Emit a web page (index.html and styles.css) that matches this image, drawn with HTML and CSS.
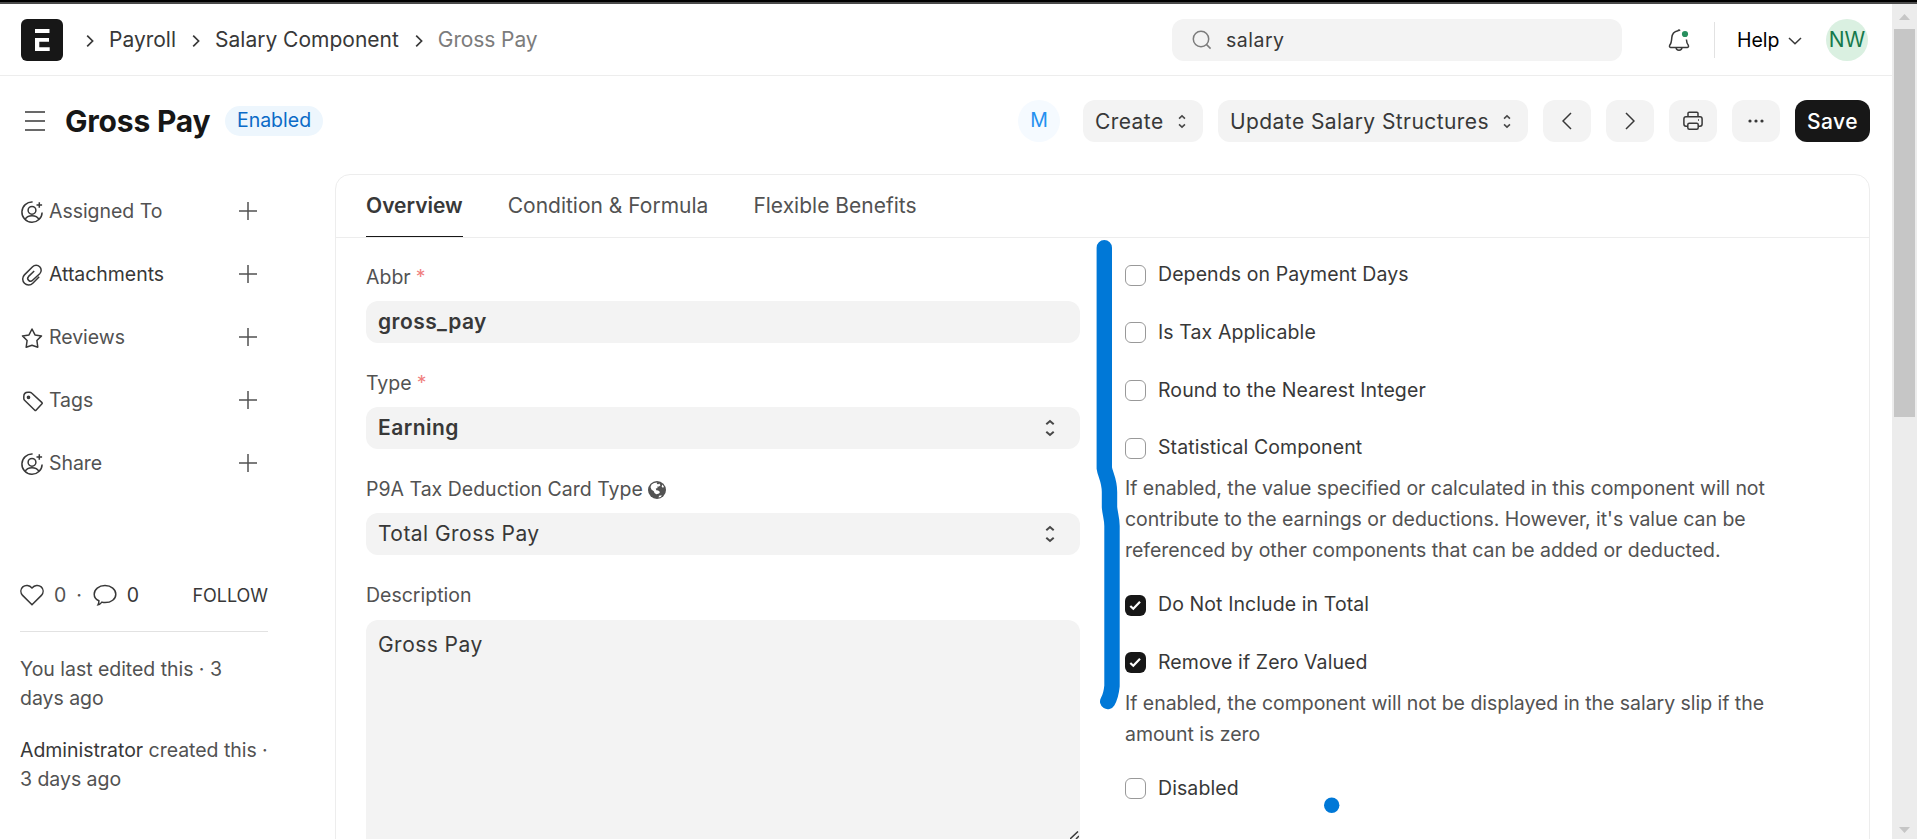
FILE: index.html
```html
<!DOCTYPE html>
<html lang="en">
<head>
<meta charset="utf-8">
<title>Gross Pay</title>
<link rel="stylesheet" href="styles.css">
</head>
<body>
<svg class="defs" width="0" height="0">
  <symbol id="assign" viewBox="0 0 24 24"><path d="M12.6 2.1A10.1 10.1 0 1 0 22.1 12.4M5.2 19.3C6.4 16.9 9 15.8 12 15.8S17.6 16.9 18.8 19.3M19.3 2.2V7.8M16.5 5H22.1"/><circle cx="12" cy="10.3" r="3.9"/></symbol>
  <symbol id="clip" viewBox="0 0 24 24"><path d="M19.2 13.8L12.8 20.2A5.9 5.9 0 0 1 4.400 11.900L12.600 3.700A5 5 0 0 1 19.700 10.800L12.600 17.300A2.700 2.700 0 0 1 8.600 13.400L14.200 8"/></symbol>
  <symbol id="star" viewBox="0 0 24 24"><path d="M12 3L15 8.9L21.5 9.9L16.9 14.5L17.8 21.2L12 19.3L6.2 21.2L7.1 14.5L2.5 9.9L9 8.9Z" stroke-linejoin="round"/></symbol>
  <symbol id="tag" viewBox="0 0 24 24"><path d="M3.8 9.4V7.5Q3.800 3.200 8 3.200H9.600Q10.800 3.200 11.600 4L22 13.600Q22.600 14.200 22 14.800L16 21.300Q15.400 21.900 14.800 21.300L4.800 11.500Q3.800 10.600 3.800 9.400Z"/><circle cx="8.500" cy="8.300" r="1.100" fill="currentColor"/></symbol>
  <symbol id="plus" viewBox="0 0 18 18"><path d="M9 0V18M0 9H18"/></symbol>
  <symbol id="crumb" viewBox="0 0 8 12"><path d="M1.200 .6L6.600 6L1.200 11.400"/></symbol>
  <symbol id="updown" viewBox="0 0 10 18"><path d="M1.300 5.300L5 2L8.700 5.300M1.300 12.700L5 16L8.700 12.700"/></symbol>
</svg>
<div class="topline"></div>
<div class="window">
  <div class="page">
    <header class="navbar">
      <svg class="logo" viewBox="0 0 42 42"><rect width="42" height="42" rx="6" fill="#171717"/><path d="M14 10H28.500V14H14ZM14 19H28V22.700H18.300V28.300H28.700V32H14Z" fill="#fff"/></svg>
      <nav class="crumbs">
        <svg class="crumb"><use href="#crumb"/></svg><a>Payroll</a>
        <svg class="crumb"><use href="#crumb"/></svg><a>Salary Component</a>
        <svg class="crumb"><use href="#crumb"/></svg><a class="current">Gross Pay</a>
      </nav>
      <div class="search">
        <svg class="search-icon" viewBox="0 0 20 20"><circle cx="9" cy="9" r="7.700"/><path d="M14.600 14.600L18.600 18.600"/></svg>
        <span>salary</span>
      </div>
      <svg class="bell" viewBox="0 0 24 24"><path d="M13 2.700Q12 1.300 11 2.700C6.500 3.600 5 6.300 4.800 9.600C4.600 13 4.300 15.300 2.700 17.200Q2 19.200 3.600 19.400H20.400Q22 19.200 21.300 17.200Q19.700 15.500 19.400 11.500M9 19.500Q9.200 22.300 12 22.300T15 19.500"/><circle cx="18" cy="6" r="3.100" class="bell-dot"/></svg>
      <div class="divider"></div>
      <div class="help"><span>Help</span><svg class="help-arrow" viewBox="0 0 14 8"><path d="M1 1L7 6.800L13 1"/></svg></div>
      <div class="avatar user">NW</div>
    </header>

    <section class="page-head">
      <svg class="menu" viewBox="0 0 20 22"><path d="M0 2H20M0 11H20M0 20H20"/></svg>
      <h1>Gross Pay</h1>
      <span class="badge">Enabled</span>
      <div class="actions">
        <div class="avatar viewer">M</div>
        <button class="btn create"><span>Create</span><svg class="updown small"><use href="#updown"/></svg></button>
        <button class="btn update"><span>Update Salary Structures</span><svg class="updown small"><use href="#updown"/></svg></button>
        <button class="btn icon-btn"><svg class="arrow" viewBox="0 0 10 18"><path d="M9 1L1 9L9 17"/></svg></button>
        <button class="btn icon-btn"><svg class="arrow" viewBox="0 0 10 18"><path d="M1 1L9 9L1 17"/></svg></button>
        <button class="btn icon-btn"><svg class="printer" viewBox="0 0 20 20"><path d="M5 5.500V2.300Q5 1.200 6.100 1.200H13.900Q15 1.200 15 2.300V5.500M4.800 15.200H3Q.9 15.200 .9 13V8Q.9 5.800 3 5.800H17Q19.100 5.800 19.100 8V13Q19.100 15.200 17 15.200H15.200"/><rect x="4.800" y="12.300" width="10.400" height="5.900" rx="1.500"/><path d="M15 9H16"/></svg></button>
        <button class="btn icon-btn"><svg class="dots" viewBox="0 0 16 4"><circle cx="2" cy="2" r="1.600"/><circle cx="8" cy="2" r="1.600"/><circle cx="14" cy="2" r="1.600"/></svg></button>
        <button class="btn save"><span>Save</span></button>
      </div>
    </section>

    <div class="content">
      <aside class="sidebar">
        <ul class="links">
          <li><svg class="icon"><use href="#assign"/></svg><span>Assigned To</span><svg class="plus"><use href="#plus"/></svg></li>
          <li class="dark"><svg class="icon"><use href="#clip"/></svg><span>Attachments</span><svg class="plus"><use href="#plus"/></svg></li>
          <li><svg class="icon"><use href="#star"/></svg><span>Reviews</span><svg class="plus"><use href="#plus"/></svg></li>
          <li><svg class="icon"><use href="#tag"/></svg><span>Tags</span><svg class="plus"><use href="#plus"/></svg></li>
          <li><svg class="icon"><use href="#assign"/></svg><span>Share</span><svg class="plus"><use href="#plus"/></svg></li>
        </ul>
        <div class="stats">
          <svg class="icon" viewBox="0 0 24 24"><path d="M12 21.800L2.600 12.400C.2 9.600 .5 6 2.800 3.900C5.500 1.600 9.400 2.100 12 5C14.600 2.100 18.500 1.600 21.200 3.900C23.500 6 23.800 9.600 21.400 12.400Z"/></svg>
          <span class="likes">0</span><span class="sep">·</span>
          <svg class="icon" viewBox="0 0 24 24"><path d="M12 2.600C18.200 2.600 22.800 6.300 22.800 11.200S18.200 19.600 12 19.600Q10.500 19.600 8.900 19.100Q7 21.500 5 21.800Q6 20.100 5.900 17.800C3 16.400 1.200 14.100 1.200 11.200C1.200 6.300 5.800 2.600 12 2.600Z"/></svg>
          <span class="comments">0</span>
          <span class="follow">FOLLOW</span>
        </div>
        <p class="log">You last edited this · 3<br>days ago</p>
        <p class="log"><b>Administrator</b> created this ·<br>3 days ago</p>
      </aside>

      <main class="card">
        <div class="tabs"><a class="active">Overview</a><a>Condition &amp; Formula</a><a>Flexible Benefits</a></div>
        <div class="form">
          <div class="fields">
            <div class="field"><label>Abbr <i>*</i></label><div class="input bold">gross_pay</div></div>
            <div class="field"><label>Type <i>*</i></label><div class="input bold">Earning<svg class="updown"><use href="#updown"/></svg></div></div>
            <div class="field"><label>P9A Tax Deduction Card Type <svg class="globe" viewBox="0 0 18 18"><circle cx="9" cy="9" r="9" fill="#525252"/><path d="M3.600 3.400L6 2L9.300 1.500L8.700 3L10.300 3.300L11.300 2.600L12.500 4.300L11 5.600L9 5.800L9.800 7L7.800 7.600L8.300 9.200L10.200 9.600L12 11L11 12.600L8.300 13.200L6.500 12L5.800 10.200L3.400 8.600L2.500 6ZM14.500 3.600L16 6L14.800 6.800L13.600 5.400ZM11 14.800L13.800 14.200L12.800 15.900L10.600 16.600Z" fill="#fff"/></svg></label><div class="input">Total Gross Pay<svg class="updown"><use href="#updown"/></svg></div></div>
            <div class="field"><label class="tall">Description</label><div class="input area">Gross Pay</div></div>
          </div>
          <div class="checks">
            <div class="check"><span class="box"></span>Depends on Payment Days</div>
            <div class="check"><span class="box"></span>Is Tax Applicable</div>
            <div class="check"><span class="box"></span>Round to the Nearest Integer</div>
            <div class="check"><span class="box"></span>Statistical Component</div>
            <p class="hint">If enabled, the value specified or calculated in this component will not<br>contribute to the earnings or deductions. However, it's value can be<br>referenced by other components that can be added or deducted.</p>
            <div class="check"><span class="box on"><svg viewBox="0 0 21 21"><path d="M5.300 11L8.300 13.800L15 6.700"/></svg></span>Do Not Include in Total</div>
            <div class="check"><span class="box on"><svg viewBox="0 0 21 21"><path d="M5.300 11L8.300 13.800L15 6.700"/></svg></span>Remove if Zero Valued</div>
            <p class="hint">If enabled, the component will not be displayed in the salary slip if the<br>amount is zero</p>
            <div class="check"><span class="box"></span>Disabled</div>
          </div>
        </div>
      </main>
    </div>
  </div>
  <div class="scrollbar">
    <svg class="scroll-arrow" viewBox="0 0 11 6"><path d="M0 6L5.500 0L11 6Z"/></svg>
    <div class="thumb"></div>
    <svg class="scroll-arrow down" viewBox="0 0 11 6"><path d="M0 0L5.500 6L11 0Z"/></svg>
  </div>
</div>
<svg class="grip" viewBox="0 0 9 8"><path d="M0 8L8 .5M6 8L9 5"/></svg>
<svg class="marker" viewBox="0 0 1917 839"><path d="M1104.300 247.700V468C1105 474 1109.500 480 1109.500 492V507C1110 514 1112 518 1112 526V686Q1111 696 1107.700 701.500"/><circle cx="1331.700" cy="805.300" r="7.700"/></svg>
</body>
</html>
```
FILE: styles.css
```css
* { box-sizing: border-box; }
body {
  margin: 0;
  height: 839px;
  overflow: hidden;
  background: #fff;
  color: #383838;
  font: 400 21px/1.2 Inter, "Liberation Sans", sans-serif;
  display: flex;
  flex-direction: column;
}
svg { fill: none; stroke: #383838; stroke-width: 1.5; flex: none; display: block; }
.defs { position: absolute; }
p, h1, ul { margin: 0; padding: 0; }

.topline { height: 4px; flex: none; background: #000; border-bottom: 2px solid #4a4a4a; }
.window { flex: 1; min-height: 0; display: flex; }
.page { width: 1892px; overflow: hidden; }

/* Navigation bar */
.navbar { height: 72px; border-bottom: 1px solid #ededed; display: flex; align-items: center; padding: 0 24px 0 21px; }
.logo { width: 42px; height: 42px; stroke: none; }
.crumbs { display: flex; align-items: center; margin-left: 23px; padding-top: 1px; }
.crumb { width: 8px; height: 12px; margin: 1px 15px 0 16px; stroke-width: 1.7; }
.crumbs .crumb:first-child { margin-left: 0; }
.crumbs .current { color: #7c7c7c; letter-spacing: -0.1px; }
.search { margin-left: auto; width: 450px; height: 42px; border-radius: 12px; background: #f3f3f3; display: flex; align-items: center; padding-left: 20px; gap: 14px; font-size: 19.5px; letter-spacing: 0.5px; }
.search span { padding-top: 2px; }
.search-icon { width: 20px; height: 20px; stroke: #7c7c7c; }
.bell { width: 24px; height: 24px; margin-left: 45px; }
.bell-dot { fill: #278f5e; stroke: none; }
.divider { width: 1px; height: 36px; background: #e2e2e2; margin: 0 22px 0 23px; }
.help { width: 65px; display: flex; align-items: center; justify-content: space-between; color: #000; font-size: 19.5px; padding-top: 2px; }
.help-arrow { width: 14px; height: 8px; margin-top: 2px; }
.avatar { width: 42px; height: 42px; border-radius: 50%; display: flex; align-items: center; justify-content: center; }
.user { margin-left: 24px; background: #daf0e1; color: #16794c; }

/* Page head */
.page-head { height: 98px; padding: 0 22px 8px 25px; display: flex; align-items: center; }
.menu { width: 20px; height: 22px; stroke: #383838; stroke-width: 1.7; }
h1 { margin-left: 20px; width: 144px; font-size: 30px; font-weight: 700; letter-spacing: -0.2px; color: #171717; white-space: nowrap; }
.badge { margin-left: 16px; width: 98px; height: 30px; border-radius: 15px; background: #edf6fd; color: #0b6bc7; font-size: 19.5px; display: flex; align-items: center; justify-content: center; }
.actions { margin-left: auto; display: flex; gap: 15px; }
.viewer { background: #f5faff; color: #2490ef; font-size: 19.5px; margin-right: 8px; }
.btn { height: 42px; border: 0; border-radius: 12px; background: #f3f3f3; font: inherit; color: #383838; padding: 0 12px; display: flex; align-items: center; justify-content: space-between; letter-spacing: 0.42px; white-space: nowrap; }
.btn span { padding-top: 1px; }
.create { width: 120px; }
.update { width: 310px; }
.icon-btn { width: 48px; justify-content: center; }
.save { width: 75px; background: #171717; color: #fff; font-weight: 500; justify-content: center; padding: 0; }
.updown { width: 10px; height: 18px; stroke: #484848; stroke-width: 2; }
.updown.small { width: 8px; height: 15px; margin-right: 5px; }
.arrow { width: 10px; height: 18px; }
.printer { width: 20px; height: 20px; }
.dots { width: 16px; height: 4px; fill: #383838; stroke: none; }

/* Body */
.content { display: flex; }
.sidebar { width: 268px; padding-left: 20px; font-size: 19.5px; letter-spacing: -0.04px; color: #525252; flex: none; }
.links { list-style: none; padding-top: 6px; }
.links li { height: 63px; display: flex; align-items: center; }
.links .icon { margin-right: 5px; margin-top: 1px; }
.links .dark { color: #383838; }
.icon { width: 24px; height: 24px; }
.plus { width: 18px; height: 18px; margin: 0 11px 1px auto; stroke: #525252; }
.stats { margin-top: 80px; height: 57px; padding-bottom: 16px; border-bottom: 1px solid #e2e2e2; display: flex; align-items: center; }
.stats span { padding-top: 1px; }
.likes { margin-left: 10px; }
.sep { margin: 0 11px 0 10px; }
.comments { margin-left: 10px; color: #383838; }
.follow { margin-left: auto; color: #383838; font-size: 18px; }
.log { line-height: 29px; padding-top: 23px; white-space: nowrap; }
.log b { font-weight: 400; color: #383838; }

.card { margin-left: 67px; width: 1535px; height: 680px; border: 1px solid #ededed; border-radius: 15px; }
.tabs { height: 63px; border-bottom: 1px solid #ededed; padding-left: 30px; display: flex; gap: 45px; color: #525252; white-space: nowrap; }
.tabs a { height: 62px; line-height: 62px; }
.tabs .active { font-weight: 600; color: #383838; border-bottom: 1px solid #171717; }
.form { display: flex; padding: 26.6px 30px 0; }
.fields { width: 714px; display: flex; flex-direction: column; gap: 21px; }
.field label { height: 25px; padding-top: 1px; margin-bottom: 11.4px; display: flex; align-items: center; gap: 5px; font-size: 19.5px; color: #525252; }
.field label.tall { margin-bottom: 12.4px; }
.field { height: 85px; }
.field label i { font-style: normal; color: #f08080; }
.globe { width: 18px; height: 18px; stroke: none; }
.input { height: 42px; border-radius: 12px; background: #f3f3f3; padding: 0 25px 0 12px; display: flex; align-items: center; justify-content: space-between; letter-spacing: 0.45px; }
.bold { font-weight: 600; }
.area { height: 240px; align-items: flex-start; padding-top: 12px; }
.checks { margin-left: 45px; font-size: 19.5px; }
.check { height: 21px; display: flex; align-items: center; gap: 12px; margin-bottom: 36.7px; white-space: nowrap; letter-spacing: 0.09px; }
.box { width: 21px; height: 21px; border: 1px solid #999; border-radius: 6px; }
.box.on { background: #171717; border: 0; }
.box svg { stroke: #fff; stroke-width: 2.2; }
.hint { line-height: 31px; letter-spacing: -0.04px; color: #525252; white-space: nowrap; margin: -22px 0 28.2px; }

/* Scrollbar */
.scrollbar { width: 25px; background: #ececec; padding: 10px 2px 6px; display: flex; flex-direction: column; align-items: center; }
.scroll-arrow { width: 11px; height: 6px; stroke: none; fill: #c6c6c6; }
.thumb { width: 21px; height: 388px; margin-top: 9px; background: #c6c6c6; }
.down { margin-top: auto; }

/* Drawn over the form */
.grip { position: absolute; left: 1070px; top: 831px; width: 9px; height: 8px; }
.marker { position: absolute; left: 0; top: 0; width: 1917px; height: 839px; stroke: #0078d7; stroke-width: 15.4; stroke-linecap: round; stroke-linejoin: round; pointer-events: none; }
.marker circle { fill: #0078d7; stroke: none; }
```
